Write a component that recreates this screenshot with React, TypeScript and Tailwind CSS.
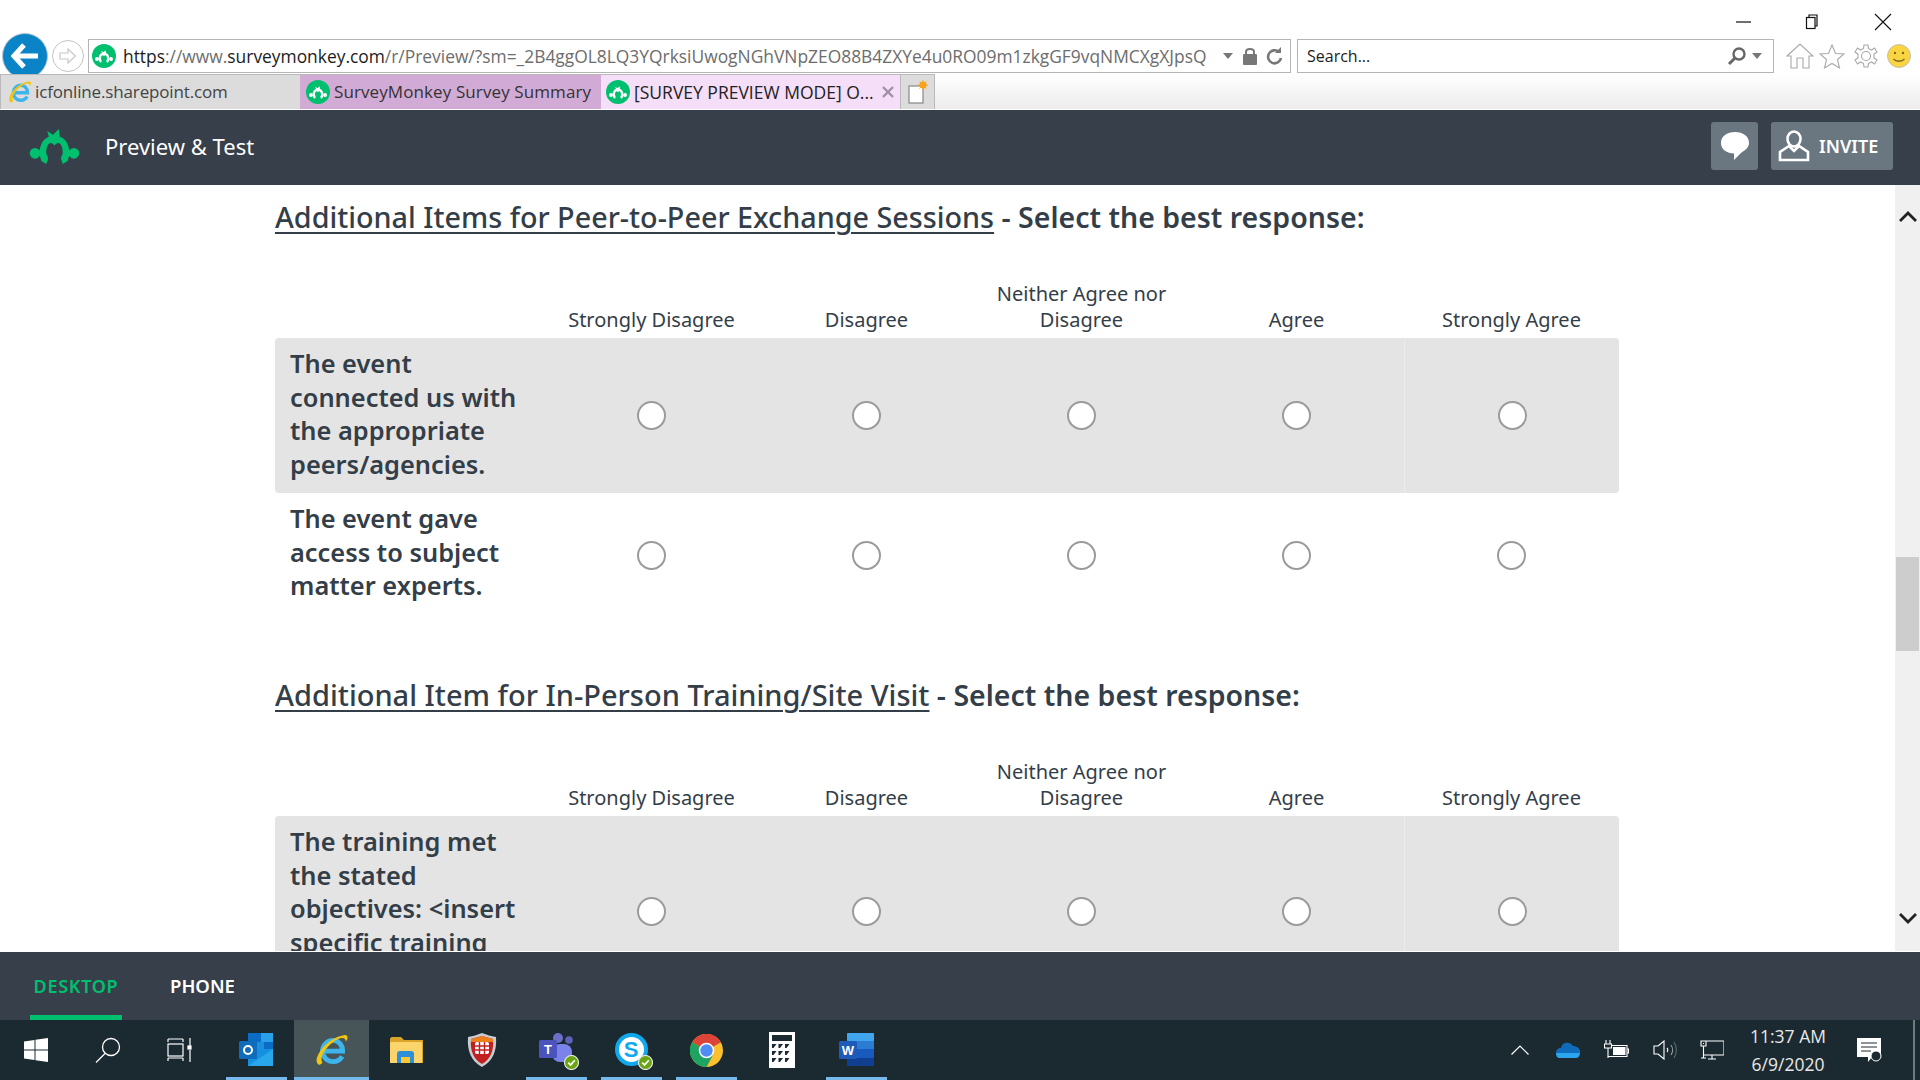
import React from "react";

const cols = ["Strongly Disagree", "Disagree", "Neither Agree nor Disagree", "Agree", "Strongly Agree"];

function Monkey({ fill = "#00bf6f", className = "" }: { fill?: string; className?: string }) {
  return (
    <svg viewBox="0 0 51 36" className={className} fill={fill}>
      <path d="M10 26C10 14 16 7 25.5 7C35 7 41 14 41 26L39 33L34 36L32 30L34 25C34 14 29 12 25.5 17C22 12 17 14 17 25L19 30L17 36L12 33Z" />
      <circle cx="5.5" cy="25" r="5.5" />
      <circle cx="45.5" cy="25" r="5.5" />
      <path d="M20 9L18 2L24 6L30 0L31 9Z" />
    </svg>
  );
}

function Favicon() {
  return (
    <span className="flex h-[24px] w-[24px] shrink-0 items-center justify-center rounded-full bg-[#00bf6f]">
      <Monkey fill="#ffffff" className="h-[13px] w-[18px]" />
    </span>
  );
}

function IE({ size = 24 }: { size?: number }) {
  return (
    <svg width={size} height={size} viewBox="0 0 32 32" fill="none">
      <path d="M7 17H26C26 10 21 7 17 7C11 7 7 12 7 17C7 23 12 27 17 27C21 27 24 25 25.5 22" stroke="#3db5ec" strokeWidth="4.5" />
      <path d="M2 28C-1 23 10 5 27 2C32 1 31 6 29 8C29 5 27 4 24 5C14 8 3 22 7 28C4 31 3 30 2 28Z" fill="#f1c40f" />
    </svg>
  );
}

function Check() {
  return (
    <svg viewBox="0 0 16 16" className="absolute -bottom-[3px] -right-[4px] h-[15px] w-[15px]">
      <circle cx="8" cy="8" r="7.5" fill="#6aa512" stroke="#e8e8e8" strokeWidth="1.2" />
      <path d="M4.5 8.2L7 10.6L11.5 5.6" stroke="#fff" strokeWidth="1.8" fill="none" />
    </svg>
  );
}

function Outlook() {
  return (
    <svg width="36" height="34" viewBox="0 0 36 34">
      <rect x="9" y="0" width="25" height="18" fill="#0a6cc4" />
      <rect x="22" y="0" width="12" height="9" fill="#2aa0e8" />
      <rect x="16" y="9" width="9" height="9" fill="#1c8fdf" />
      <path d="M9 16L34 16V33H9Z" fill="#1490df" />
      <path d="M9 33L34 16V33Z" fill="#28a8ea" />
      <rect x="0" y="8" width="18" height="18" rx="1.5" fill="#0f6cbd" />
      <circle cx="9" cy="17" r="4" fill="none" stroke="#fff" strokeWidth="2" />
    </svg>
  );
}

function Word() {
  return (
    <svg width="36" height="34" viewBox="0 0 36 34">
      <rect x="8" y="0" width="27" height="33" rx="1.5" fill="#2b7cd3" />
      <rect x="8" y="0" width="27" height="8" rx="1" fill="#41a5ee" />
      <rect x="8" y="16" width="27" height="9" fill="#185abd" />
      <rect x="8" y="25" width="27" height="8" fill="#103f91" />
      <rect x="0" y="8" width="18" height="18" rx="1.5" fill="#1e5bb8" />
      <text x="9" y="22" textAnchor="middle" fontSize="13" fontWeight="700" fill="#fff" fontFamily="Liberation Sans">W</text>
    </svg>
  );
}

function Teams() {
  return (
    <span className="relative block h-[34px] w-[36px]">
      <svg width="36" height="34" viewBox="0 0 36 34">
        <circle cx="19" cy="5" r="5" fill="#6b6fc6" />
        <circle cx="30" cy="7" r="3.8" fill="#5f63b8" />
        <rect x="13" y="11" width="20" height="18" rx="8" fill="#7b83eb" />
        <rect x="0" y="7" width="18" height="18" rx="1.5" fill="#4b53bc" />
        <text x="9" y="21" textAnchor="middle" fontSize="13" fontWeight="700" fill="#fff" fontFamily="Liberation Sans">T</text>
      </svg>
      <Check />
    </span>
  );
}

function Skype() {
  return (
    <span className="relative block h-[34px] w-[34px]">
      <span className="flex h-[33px] w-[33px] items-center justify-center rounded-full border-[4px] border-[#11a9ee] bg-white font-['Liberation_Sans',sans-serif] text-[22px] font-bold leading-none text-[#11a9ee]">
        S
      </span>
      <Check />
    </span>
  );
}

function Chrome() {
  return (
    <svg width="33" height="33" viewBox="0 0 32 32">
      <circle cx="16" cy="16" r="16" fill="#fbc02d" />
      <path d="M16 16L2.1 8A16 16 0 0 1 29.9 8Z" fill="#db4437" />
      <path d="M16 16L2.1 8A16 16 0 0 0 16 32L22 21Z" fill="#1da462" />
      <circle cx="16" cy="16" r="7.5" fill="#fff" />
      <circle cx="16" cy="16" r="6" fill="#4f8df5" />
    </svg>
  );
}

function Calc() {
  const tri: React.ReactNode[] = [];
  for (let r = 0; r < 3; r++)
    for (let c = 0; c < 3; c++) {
      const x = 3 + c * 6.5;
      const y = 12 + r * 7;
      tri.push(<path key={`${r}-${c}`} d={`M${x} ${y}h4.5l-3 4h-1.5z`} fill="#1b2a30" />);
    }
  return (
    <svg width="26" height="36" viewBox="0 0 26 36">
      <rect width="26" height="36" fill="#fff" />
      <rect x="3" y="3" width="20" height="6" fill="#1b2a30" />
      {tri}
    </svg>
  );
}

function Folder() {
  return (
    <svg width="33" height="27" viewBox="0 0 33 27">
      <path d="M0 2C0 1 1 0 2 0H11L14 3H33V26H0Z" fill="#d9a429" />
      <rect y="5" width="32" height="21" rx="1" fill="#fbd56b" />
      <path d="M7 26V17C7 15 8 14 10 14H21C23 14 24 15 24 17V26H20V20H11V26Z" fill="#2d8fd9" />
      <rect x="11" y="20" width="9" height="6" fill="#fbc933" />
    </svg>
  );
}

function Shield() {
  return (
    <svg width="30" height="34" viewBox="0 0 30 34">
      <path d="M1 4C6 3 10 2 15 0C20 2 24 3 29 4C30 18 26 28 15 34C4 28 0 18 1 4Z" fill="#c9ccd0" />
      <path d="M4 6C8 5 11 4 15 3C19 4 22 5 26 6C27 17 24 26 15 31C6 26 3 17 4 6Z" fill="#c02020" />
      <path d="M4 6C8 5 11 4 15 3C19 4 22 5 26 6V9H4Z" fill="#ee7f1d" />
      <rect x="8" y="9" width="14" height="12" rx="2" fill="#fff" />
      <path d="M8 13H22M8 17H22M12.500 9V21M17.500 9V21" stroke="#c02020" strokeWidth="1.5" />
    </svg>
  );
}

const font = "font-['Noto_Sans',sans-serif]";
const uiFont = "font-['Open_Sans',sans-serif]";

function Radio() {
  return <span className="block h-[29px] w-[29px] rounded-full border-2 border-[#9b9b9b] bg-white" />;
}

function MatrixRow({ lines, shaded, height }: { lines: string; shaded?: boolean; height: string }) {
  return (
    <div className={`grid grid-cols-[269px_repeat(5,215px)] rounded-[4px] ${height} ${shaded ? "bg-[#e4e4e4]" : "bg-white"}`}>
      <div className="pl-[15px] pt-[9px] pr-[20px] text-[25.4px] font-semibold leading-[33.7px] text-[#333e48]">{lines}</div>
      {cols.map((c, i) => (
        <div key={c} className={`flex items-center justify-center ${i === 4 && shaded ? "border-l border-[#ececec]" : ""}`}>
          <Radio />
        </div>
      ))}
    </div>
  );
}

function Section({ title, rest, titleClass, children }: { title: string; rest: string; titleClass: string; children: React.ReactNode }) {
  return (
    <div className="w-[1344px]">
      <div className="flex h-[64px] items-center text-[28.5px] text-[#333e48]">
        <span>
          <span className={`font-medium underline decoration-2 underline-offset-[4px] ${titleClass}`}>{title}</span>
          <span className="font-semibold"> - {rest}</span>
        </span>
      </div>
      <div className="grid h-[89px] grid-cols-[269px_repeat(5,215px)] items-end pb-[5px]">
        <div />
        {cols.map((c) => (
          <div key={c} className="px-[20px] text-center text-[20px] leading-[26px] text-[#333e48]">
            {c}
          </div>
        ))}
      </div>
      {children}
    </div>
  );
}

function TaskCell({ children, width = "w-[75px]", active, running }: { children?: React.ReactNode; width?: string; active?: boolean; running?: boolean }) {
  return (
    <div className={`relative flex h-[60px] items-center justify-center ${width} ${active ? "bg-[#475458]" : ""}`}>
      {children}
      {running && <span className={`absolute bottom-0 h-[3px] bg-[#76b9ed] ${active ? "inset-x-0" : "inset-x-[7px]"}`} />}
    </div>
  );
}

export default function App() {
  return (
    <div className={`flex h-[1080px] w-[1920px] flex-col overflow-hidden bg-white ${font}`}>
      {/* window title row */}
      <div className="flex h-[38px] shrink-0 items-start bg-white pl-[1736px]">
        <svg width="16" height="10" viewBox="0 0 16 10" className="mt-[17px]"><path d="M0 5H15" stroke="#111" strokeWidth="1.2" /></svg>
        <svg width="16" height="16" viewBox="0 0 16 16" className="ml-[53px] mt-[14px]" fill="none" stroke="#111" strokeWidth="1.2"><path d="M4 3V1H12V12H10" /><rect x="1.500" y="3.500" width="8.500" height="11" /></svg>
        <svg width="18" height="18" viewBox="0 0 18 18" className="ml-[53px] mt-[13px]"><path d="M1 1L17 17M17 1L1 17" stroke="#111" strokeWidth="1.1" /></svg>
      </div>

      {/* toolbar */}
      <div className={`flex h-[36px] shrink-0 items-center pl-[2px] ${uiFont}`}>
        <div className="z-0 -my-[10px] flex h-[46px] w-[46px] shrink-0 items-center justify-center rounded-full border border-[#b5c7d3] bg-[#0a84c6]">
          <svg width="28" height="26" viewBox="0 0 28 26" fill="none" stroke="#fff" strokeWidth="5"><path d="M13 2L3 13L13 24M4 13H27" /></svg>
        </div>
        <div className="ml-[4px] flex h-[32px] w-[32px] shrink-0 items-center justify-center rounded-full border border-[#c4c4c4]">
          <svg width="18" height="16" viewBox="0 0 18 16" fill="none" stroke="#c8c8c8" strokeWidth="1.200"><path d="M9 1L16.500 8L9 15V11H1V5H9Z" /></svg>
        </div>
        <div className="ml-[4px] flex h-[34px] w-[1203px] shrink-0 items-center border border-[#b4b4b4] bg-white pl-[3px]">
          <Favicon />
          <span className="ml-[7px] w-[1095px] overflow-hidden whitespace-nowrap text-[17.4px] text-[#6d6d6d]">
            <span className="text-[#1c1c1c]">https</span>://www.<span className="text-[#1c1c1c]">surveymonkey.com</span>/r/Preview/?sm=_2B4ggOL8LQ3YQrksiUwogNGhVNpZEO88B4ZXYe4u0RO09m1zkgGF9vqNMCXgXJpsQ
          </span>
          <svg width="10" height="6" viewBox="0 0 10 6" className="ml-[5px]"><path d="M0 0H10L5 6Z" fill="#777" /></svg>
          <svg width="14" height="18" viewBox="0 0 14 18" className="ml-[10px]"><rect y="7" width="14" height="11" rx="1" fill="#777" /><path d="M3 8V5C3 1 11 1 11 5V8" stroke="#777" strokeWidth="2" fill="none" /></svg>
          <svg width="17" height="18" viewBox="0 0 17 18" className="ml-[9px]" fill="none"><path d="M13 5A6.500 6.500 0 1 0 15 11" stroke="#777" strokeWidth="2.600" /><path d="M9 6L15 6L15 0Z" fill="#777" /></svg>
        </div>
        <div className="ml-[6px] flex h-[34px] w-[477px] shrink-0 items-center border border-[#b4b4b4] bg-white pl-[9px] text-[16px] text-[#1c1c1c]">
          <span className="flex-1">Search...</span>
          <svg width="20" height="20" viewBox="0 0 20 20" fill="none" stroke="#666" strokeWidth="2.400"><circle cx="12" cy="8" r="5.500" /><path d="M8 12L2 18" strokeWidth="3" /></svg>
          <svg width="10" height="6" viewBox="0 0 10 6" className="ml-[5px] mr-[11px]"><path d="M0 0H10L5 6Z" fill="#777" /></svg>
        </div>
        <svg width="28" height="26" viewBox="0 0 28 26" className="ml-[12px]" fill="none" stroke="#a8a8a8" strokeWidth="1.100"><path d="M1 13L14 1L27 13L23 13V25H17V15H11V25H5V13Z" /></svg>
        <svg width="26" height="25" viewBox="0 0 26 25" className="ml-[5px]" fill="none" stroke="#a8a8a8" strokeWidth="1.100"><path d="M13 1L16.500 9.500L25 10L18.500 15.500L20.500 24L13 19.500L5.500 24L7.500 15.500L1 10L9.500 9.500Z" /></svg>
        <svg width="24" height="24" viewBox="0 0 24 24" className="ml-[9px]" fill="none" stroke="#a8a8a8" strokeWidth="1.100"><circle cx="12" cy="12" r="4.500" /><path d="M10 1H14L14.500 4.500L17.500 6L20.500 4L23 8L20 10L20 14L23 16L20.500 20L17.500 18L14.500 19.500L14 23H10L9.500 19.500L6.500 18L3.500 20L1 16L4 14L4 10L1 8L3.500 4L6.500 6L9.500 4.500Z" /></svg>
        <svg width="24" height="24" viewBox="0 0 24 24" className="ml-[9px]"><circle cx="12" cy="12" r="11.500" fill="#fbd442" stroke="#b9b9b9" strokeWidth="0.800" /><circle cx="8" cy="9" r="1.200" fill="#7a6a20" /><circle cx="16" cy="9" r="1.200" fill="#7a6a20" /><path d="M6.500 15C9 18 15 18 17.500 15" stroke="#7a6a20" strokeWidth="1.300" fill="none" /></svg>
      </div>

      {/* tabs */}
      <div className={`relative z-10 flex h-[35px] shrink-0 text-[#333] ${uiFont} bg-gradient-to-b from-white to-[#ececec]`}>
        <div className="flex w-[300px] items-center border-l border-t border-[#b9b9b9] bg-[#dcdcdc] pl-[7px]">
          <IE size={24} />
          <span className="ml-[3px] text-[17px] tracking-[-0.15px] text-[#444]">icfonline.sharepoint.com</span>
        </div>
        <div className="flex w-[301px] items-center border-t border-[#b9b9b9] bg-[#d2aad6] pl-[6px]">
          <Favicon />
          <span className="ml-[4px] whitespace-nowrap text-[17px] tracking-[0.1px]">SurveyMonkey Survey Summary</span>
        </div>
        <div className="flex w-[299px] items-center border-t border-[#b9b9b9] bg-[#f5def8] pl-[5px]">
          <Favicon />
          <span className="ml-[4px] w-[239px] whitespace-nowrap text-[17.5px] text-[#222]">[SURVEY PREVIEW MODE] O...</span>
          <svg width="12" height="12" viewBox="0 0 12 12" className="ml-[9px]"><path d="M1 1L11 11M11 1L1 11" stroke="#a08fa6" strokeWidth="2.400" /></svg>
        </div>
        <div className="flex w-[35px] items-center justify-center border-x border-t border-[#b9b9b9] bg-[#dcdcdc]">
          <svg width="20" height="24" viewBox="0 0 20 24"><rect x="1" y="6" width="14" height="17" fill="#fff" stroke="#888" strokeWidth="1.200" /><circle cx="15" cy="5" r="3.600" fill="#f9a51a" /><path d="M15 0V10M10 5H20M11.500 1.500L18.500 8.500M18.500 1.500L11.500 8.500" stroke="#f9a51a" strokeWidth="1" /></svg>
        </div>
      </div>

      {/* app header */}
      <div className="mt-px flex h-[75px] shrink-0 items-center bg-[#363f4a] pb-[3px] pl-[29px] pr-[27px]">
        <Monkey className="h-[35px] w-[51px]" />
        <span className="ml-[25px] flex-1 text-[22px] text-white">Preview &amp; Test</span>
        <div className="flex h-[48px] w-[47px] items-center justify-center rounded-[3px] bg-[#6b7780]">
          <svg width="30" height="30" viewBox="0 0 30 30" fill="#fff"><path d="M15 1C7 1 1 5 1 12C1 19 7 22 14 22.500L14 29L22 21C26 19 29 16 29 12C29 5 23 1 15 1Z" /></svg>
        </div>
        <div className="ml-[13px] flex h-[48px] w-[122px] items-center rounded-[3px] bg-[#6b7780] pl-[7px] text-[18px] font-semibold text-white">
          <svg width="32" height="32" viewBox="0 0 32 32" fill="none" stroke="#fff" strokeWidth="2.600"><ellipse cx="16" cy="9" rx="6.500" ry="7.500" /><path d="M11 16L2 22V30H30V22L21 16L16 21Z" /></svg>
          <span className="ml-[9px]">INVITE</span>
        </div>
      </div>

      {/* body */}
      <div className="flex min-h-0 flex-1 overflow-hidden border-b border-white">
        <div className="flex-1 overflow-hidden pl-[275px]">
          <Section title="Additional Items for Peer-to-Peer Exchange Sessions" rest="Select the best response:" titleClass="text-[28.75px]">
            <MatrixRow shaded height="h-[155px]" lines="The event connected us with the appropriate peers/agencies." />
            <MatrixRow height="h-[124px]" lines="The event gave access to subject matter experts." />
          </Section>
          <div className="h-[46px]" />
          <Section title="Additional Item for In-Person Training/Site Visit" rest="Select the best response:" titleClass="text-[29px]">
            <MatrixRow shaded height="h-[190px]" lines="The training met the stated objectives: <insert specific training" />
          </Section>
        </div>
        <div className="flex w-[25px] shrink-0 flex-col items-center bg-[#f0f0f0] px-px">
          <svg width="18" height="12" viewBox="0 0 18 12" className="mt-[25px]" fill="none" stroke="#222" strokeWidth="2.800"><path d="M1 11L9 3L17 11" /></svg>
          <div className="mt-[335px] h-[94px] w-full bg-[#cdcdcd]" />
          <svg width="18" height="12" viewBox="0 0 18 12" className="mt-[262px]" fill="none" stroke="#222" strokeWidth="2.800"><path d="M1 1L9 9L17 1" /></svg>
        </div>
      </div>

      {/* device switch */}
      <div className="flex h-[68px] shrink-0 bg-[#363f4a] text-[18px] font-semibold">
        <div className="ml-[30px] flex h-full w-[92px] items-center justify-center border-b-[5px] border-[#00bf6f] pt-[5px] tracking-[0.7px] text-[#00bf6f]">DESKTOP</div>
        <div className="ml-[48px] flex h-full items-center text-[18.5px] text-white">PHONE</div>
      </div>

      {/* taskbar */}
      <div className="flex h-[60px] shrink-0 items-center bg-[#1b2a30]">
        <TaskCell width="w-[72px]">
          <svg width="24" height="24" viewBox="0 0 24 24" fill="#fff"><path d="M0 3.500L10.500 2V11.500H0ZM11.500 1.800L24 0V11.500H11.500ZM0 12.500H10.500V22L0 20.500ZM11.500 12.500H24V24L11.500 22.200Z" /></svg>
        </TaskCell>
        <TaskCell width="w-[72px]">
          <svg width="26" height="26" viewBox="0 0 26 26" fill="none" stroke="#fff" strokeWidth="1.300"><circle cx="16" cy="10" r="8.500" /><path d="M10 16.500L1 25.500" /></svg>
        </TaskCell>
        <TaskCell width="w-[72px]">
          <svg width="26" height="24" viewBox="0 0 26 24" fill="none" stroke="#fff" strokeWidth="1.200"><path d="M1 4V1M16 4V1M1 1H16M1 23V20M16 23V20M1 20H16" /><rect x="1" y="6" width="15" height="12" /><path d="M23 0V8M23 12V24" /><rect x="21" y="8" width="3" height="3" fill="#fff" /></svg>
        </TaskCell>
        <div className="w-[3px]" />
        <TaskCell running><Outlook /></TaskCell>
        <TaskCell active running><IE size={34} /></TaskCell>
        <TaskCell><Folder /></TaskCell>
        <TaskCell><Shield /></TaskCell>
        <TaskCell running><Teams /></TaskCell>
        <TaskCell running><Skype /></TaskCell>
        <TaskCell running><Chrome /></TaskCell>
        <TaskCell><Calc /></TaskCell>
        <TaskCell running><Word /></TaskCell>

        <div className="ml-[617px] flex h-full items-center">
          <svg width="18" height="10" viewBox="0 0 18 10" fill="none" stroke="#fff" strokeWidth="1.200"><path d="M0.500 9.500L9 1L17.500 9.500" /></svg>
          <svg width="25" height="16" viewBox="0 0 25 16" className="ml-[27px]"><path d="M5 6C6 0 14 -1 17 4C21 4 25 7 24 11H0C0 8 2 6 5 6Z" fill="#0f6cbd" /><path d="M0 11H24C24 14 22 16 20 16H4C1 16 0 14 0 11Z" fill="#2ba5ee" /></svg>
          <svg width="25" height="20" viewBox="0 0 25 20" className="ml-[23px]" fill="none" stroke="#fff" strokeWidth="1.100"><path d="M2 0V4M6 0V4M0.500 4H7.500V8H0.500ZM4 8V18" /><path d="M7.500 5.500H23V16.500H4" /><path d="M23 9H24.500V13H23" /><rect x="9" y="7" width="12.500" height="8" fill="#fff" stroke="none" /></svg>
          <svg width="24" height="20" viewBox="0 0 24 20" className="ml-[24px]" fill="none" stroke="#fff" strokeWidth="1.100"><path d="M1 6V14H5L11 19V1L5 6Z" /><path d="M14 8C15 9 15 11 14 12" /><path d="M18 5C20 8 20 12 18 15" stroke="#8f9a9d" /><path d="M21 2C24 7 24 13 21 18" stroke="#5c6a6e" /></svg>
          <svg width="24" height="20" viewBox="0 0 24 20" className="ml-[23px]" fill="none" stroke="#fff" strokeWidth="1.100"><path d="M6 1H24V15H4M1 1H6V6H1ZM3.500 6V18M12 15V19M8 19H16M1 18H6M3.500 3V4" /></svg>
          <div className="ml-[26px] flex w-[76px] flex-col items-center font-['Open_Sans',sans-serif] text-[17.5px] leading-[28px] text-[#e8e8e8]">
            <span className="whitespace-nowrap">11:37 AM</span>
            <span className="whitespace-nowrap">6/9/2020</span>
          </div>
          <svg width="26" height="25" viewBox="0 0 26 25" className="ml-[31px]"><path d="M0 0H24V19H15L11 24V19H0Z" fill="#fff" /><path d="M4 5H20M4 9H20M4 13H14" stroke="#1b2a30" strokeWidth="1" /><circle cx="19" cy="18" r="5" fill="#1b2a30" stroke="#fff" strokeWidth="1" /></svg>
          <span className="ml-[30px] h-[60px] w-[2px] bg-[#6d7a7e]" />
        </div>
      </div>
    </div>
  );
}
